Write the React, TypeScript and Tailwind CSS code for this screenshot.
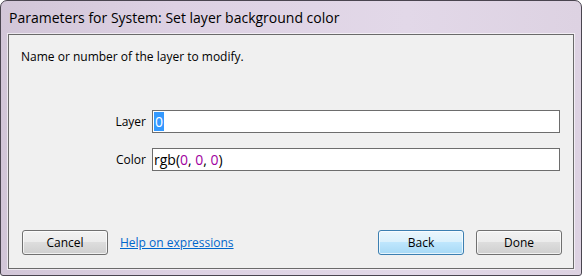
const ui = "font-['Open_Sans','Noto_Sans',sans-serif]";

function WinButton({ label, isDefault }: { label: string; isDefault?: boolean }) {
  return (
    <button
      className={
        'w-[86px] h-[25px] rounded-[3px] border text-[12px] text-black shadow-[inset_0_0_0_1px_rgba(255,255,255,0.7)] ' +
        (isDefault
          ? 'border-[#3c7fb1] bg-[linear-gradient(#eaf6fd_0%,#d9f0fc_50%,#bee6fd_50%,#a7d9f5_100%)]'
          : 'border-[#707070] bg-[linear-gradient(#f2f2f2_0%,#ebebeb_50%,#dddddd_50%,#cfcfcf_100%)]')
      }
    >
      {label}
    </button>
  );
}

export default function App() {
  return (
    <div className={`w-[582px] h-[276px] ${ui}`}>
      <div className="w-full h-full rounded-t-[7px] rounded-b-[3px] border border-[#4a4550] bg-[linear-gradient(90deg,#d2c6d8_0%,#ddd1e3_30%,#e2d8e8_70%,#ddd2e2_100%)] flex flex-col">
        <div className="h-[33px] pl-[8px] flex items-center text-[14px] text-black">
          Parameters for System: Set layer background color
        </div>
        <div className="mx-[7px] flex-1 mb-[6px] border border-[#6a6a6a] bg-[#f0f0f0] shadow-[0_0_0_1px_rgba(255,255,255,0.6)] flex flex-col">
          <div className="pl-[12px] pt-[14px] text-[12px] leading-[16px] text-black">
            Name or number of the layer to modify.
          </div>
          <div className="mt-[45px] flex flex-col gap-[15px]">
            <div className="flex items-center">
              <div className="w-[143px] pr-[6px] text-right text-[12px] text-black">Layer</div>
              <div className="w-[408px] h-[23px] border border-[#6d6d6d] bg-white flex items-center pl-[1px] text-[14px]">
                <span className="bg-[#3399ff] text-white px-[1px] leading-[19px]">0</span>
              </div>
            </div>
            <div className="flex items-center">
              <div className="w-[143px] pr-[6px] text-right text-[12px] text-black">Color</div>
              <div className="w-[408px] h-[23px] border border-[#6d6d6d] bg-white flex items-center pl-[1px] text-[14px] text-black">
                rgb(<span className="text-[#a000a0]">0</span>,&nbsp;<span className="text-[#a000a0]">0</span>,&nbsp;<span className="text-[#a000a0]">0</span>)
              </div>
            </div>
          </div>
          <div className="mt-auto mb-[13px] pl-[13px] pr-[11px] flex items-center">
            <WinButton label="Cancel" />
            <a className="ml-[12px] text-[12px] text-[#0066cc] underline">Help on expressions</a>
            <div className="ml-auto flex gap-[12px]">
              <WinButton label="Back" isDefault />
              <WinButton label="Done" />
            </div>
          </div>
        </div>
      </div>
    </div>
  );
}
